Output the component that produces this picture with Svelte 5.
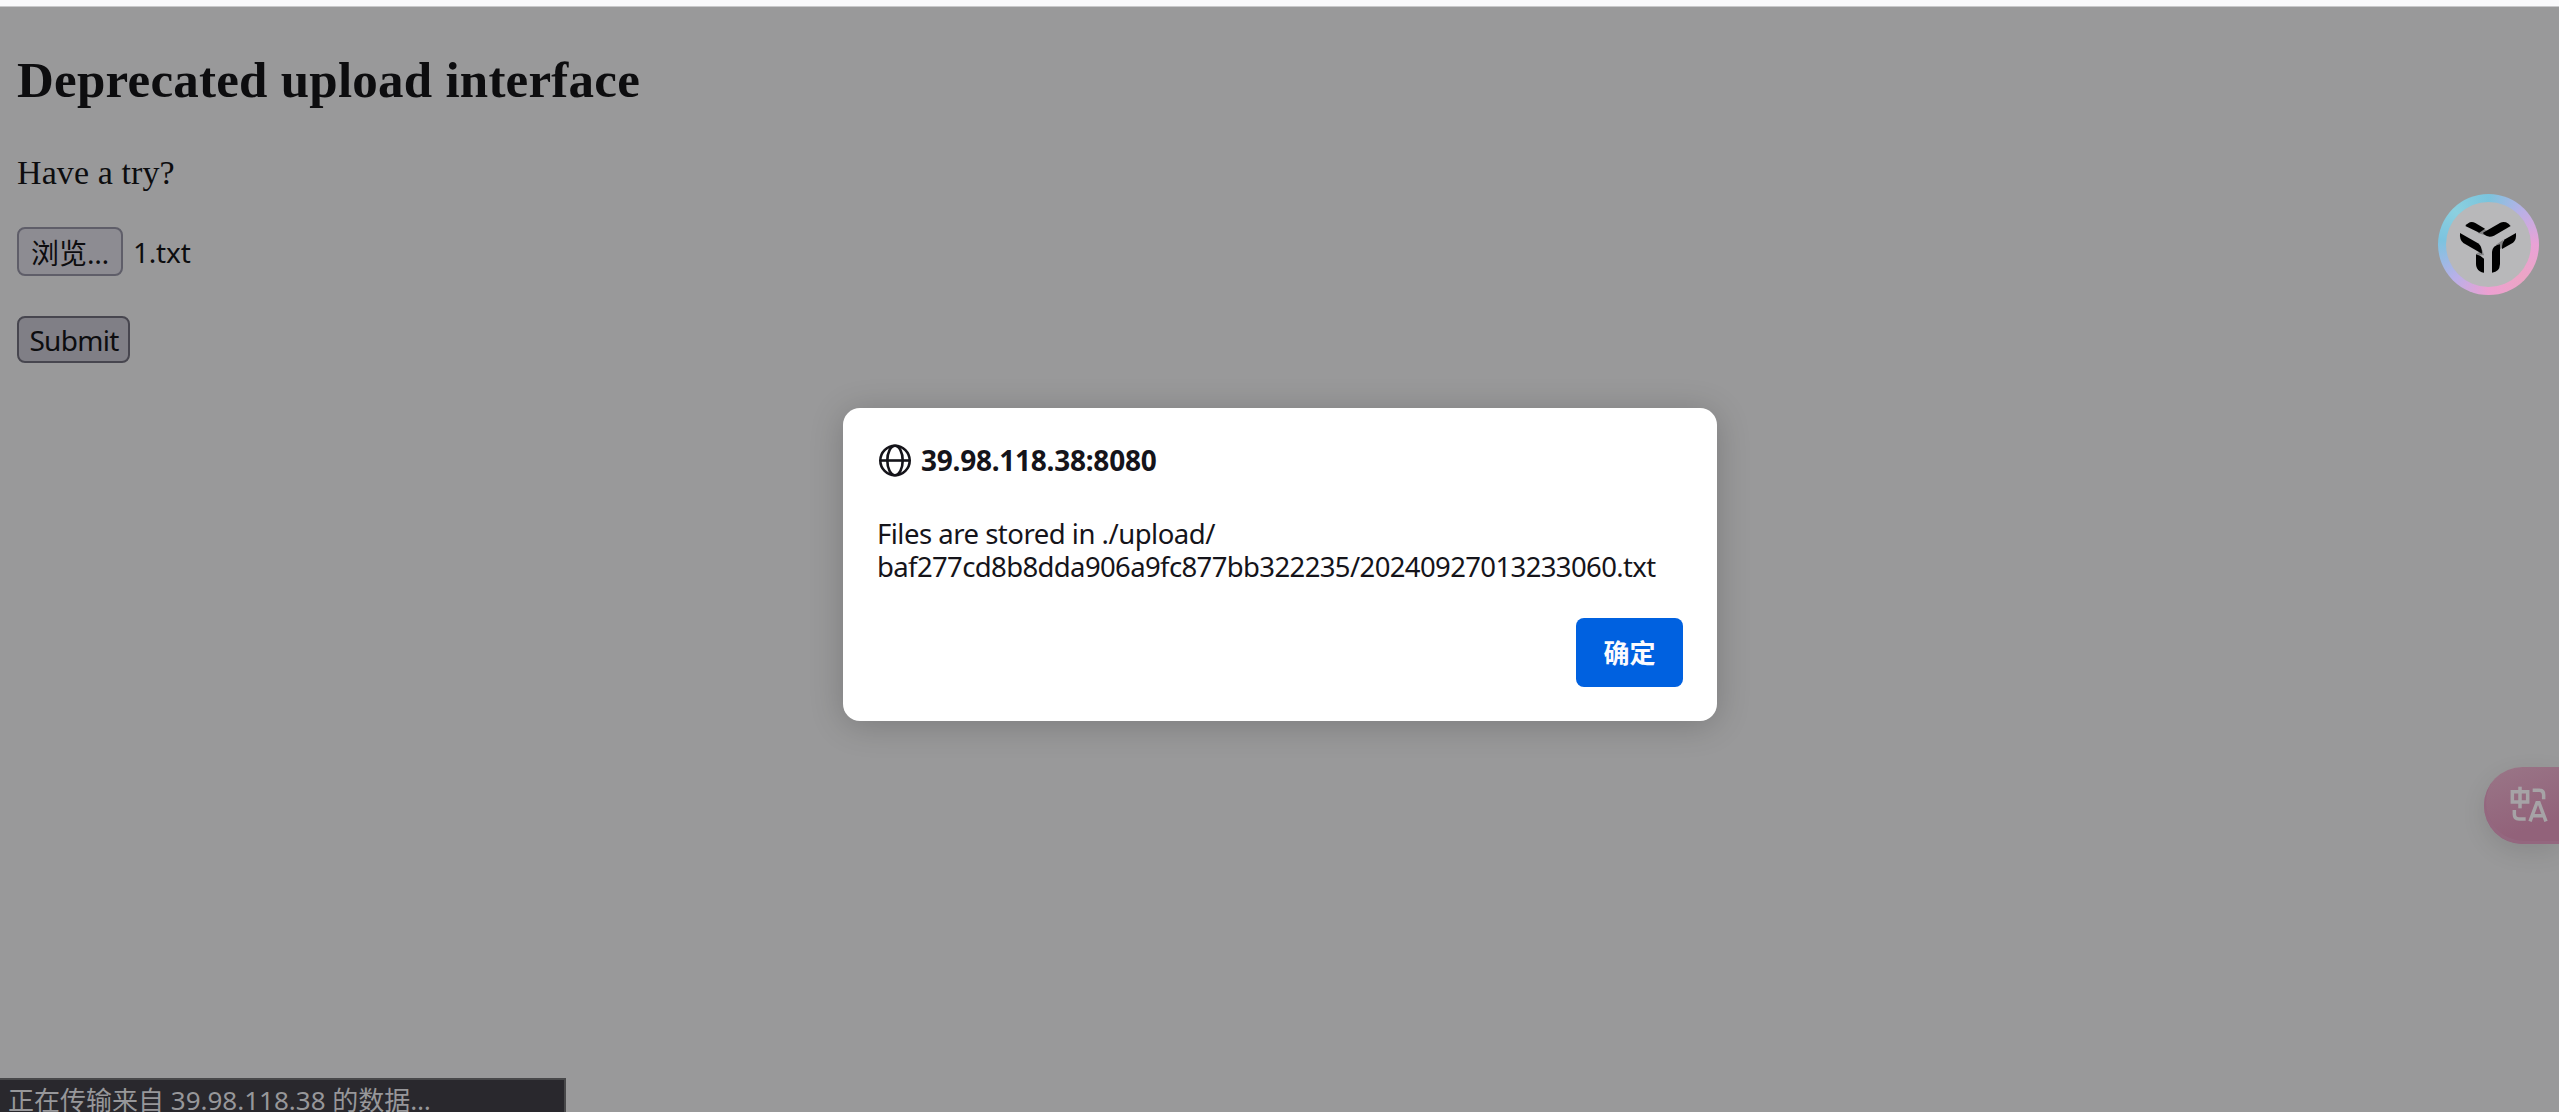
<script lang="ts">
  /**
   * App.svelte - Upload page with a modal alert shown after submitting
   */

  const host = '39.98.118.38';
  const fileName = '1.txt';
  const storedDir = './upload/';
  const storedFile = 'baf277cd8b8dda906a9fc877bb322235/20240927013233060.txt';

  let dialogOpen = $state(true);

  function closeDialog() {
    dialogOpen = false;
  }
</script>

<div class="window">
  <div class="toolbar-edge"></div>

  <main class="page">
    <h2>Deprecated upload interface</h2>
    <p class="intro">Have a try?</p>
    <form class="upload-form" onsubmit={(e) => e.preventDefault()}>
      <div class="file-row">
        <button type="button" class="control browse">浏览…</button>
        <span class="file-name">{fileName}</span>
      </div>
      <button type="submit" class="control submit"><span>Submit</span></button>
    </form>
  </main>

  <button type="button" class="assistant" aria-label="Assistant">
    <svg viewBox="78 66 255 255" aria-hidden="true">
      <g fill="#828284">
        <path d="M172 158 L191 146 L204 154 L190 164 Z" />
        <path d="M228 194 L249 180 L249 202 L240 208 Z" />
        <path d="M168 222 L187 210 L192 226 L180 226 Z" />
      </g>
      <g fill="#000">
        <path d="M136 138 Q144 127 155 126 Q160 126 166 129 L195 146 L178 158 Z" />
        <path d="M189 158 L241 128 Q249 124 258 127 Q266 130 272 138 L222 167 Q206 175 191 163 Z" />
        <path d="M120 159 L174 190 Q187 199 186 221 L130 189 Q118 180 120 159 Z" />
        <path d="M288 159 L255 178 Q246 185 246 207 L279 188 Q290 180 288 159 Z" />
        <path d="M168 223 Q181 226 192 236 L192 278 Q177 277 171 265 Q168 260 168 252 Z" />
        <path d="M216 278 L216 216 Q217 197 240 193 L240 252 Q239 276 216 278 Z" />
      </g>
    </svg>
  </button>

  <button type="button" class="translate" aria-label="Translate">
    <svg viewBox="208 134 114 108" aria-hidden="true">
      <g fill="none" stroke="#a6a3a6" stroke-width="10.5">
        <path d="M215 151 H261 V182 H215 Z" />
        <path d="M238 136 V201" />
        <path d="M276 147 H296 Q309 147 309 160 V174" />
        <path d="M221 206 V219 Q221 233 235 233 H255" />
        <path d="M268 240 L289 184 H295 L316 240 M277 223 H307" />
      </g>
    </svg>
  </button>

  {#if dialogOpen}
    <div class="dialog" role="alertdialog" aria-modal="true" aria-labelledby="dialog-title">
      <div class="dialog-header">
        <svg class="globe" viewBox="0 0 32 32" aria-hidden="true">
          <g fill="none" stroke="#15141a" stroke-width="2.6">
            <circle cx="16" cy="16" r="14.7" />
            <ellipse cx="16" cy="16" rx="7.7" ry="14.7" />
            <path d="M1 16 H31" />
          </g>
        </svg>
        <span class="dialog-title" id="dialog-title">{host}:8080</span>
      </div>
      <div class="dialog-message">
        <div class="line-dir">Files are stored in {storedDir}</div>
        <div class="line-file">{storedFile}</div>
      </div>
      <div class="dialog-actions">
        <button type="button" class="btn-primary" onclick={closeDialog}>确定</button>
      </div>
    </div>
  {/if}

  <div class="status">正在传输来自 {host} 的数据…</div>
</div>

<style>
  .window {
    position: relative;
    box-sizing: border-box;
    width: 100%;
    height: 1112px;
    overflow: hidden;
    background: #99999a;
    color: #0d0d0f;
  }

  .toolbar-edge {
    box-sizing: border-box;
    height: 7px;
    background: #f9f9fb;
    border-bottom: 1px solid #c8c8ca;
  }

  .page {
    padding: 0 17px;
    font-family: 'Liberation Serif', serif;
  }

  h2 {
    margin: 44px 0 0;
    font-size: 51px;
    line-height: 59px;
    letter-spacing: 0.24px;
  }

  .intro {
    margin: 43px 0 0;
    font-size: 34px;
    line-height: 39px;
    letter-spacing: 0.1px;
  }

  .upload-form {
    display: flex;
    flex-direction: column;
    align-items: flex-start;
    gap: 40px;
    margin-top: 35px;
    font-family: 'Noto Sans', 'Noto Sans CJK SC', sans-serif;
    font-size: 28px;
  }

  .file-row {
    display: flex;
    align-items: center;
    gap: 10px;
  }

  .control {
    box-sizing: border-box;
    display: flex;
    align-items: center;
    justify-content: center;
    padding: 0;
    border: 2px solid #5f5e69;
    border-radius: 8px;
    background: #8d8c92;
    color: #0d0d0f;
    font: inherit;
    white-space: nowrap;
  }

  .browse {
    width: 106px;
    height: 49px;
  }

  .submit {
    width: 113px;
    height: 47px;
    padding-left: 1px;
    border-color: #47464f;
    background: #807f86;
    letter-spacing: -0.7px;
  }

  .file-name {
    letter-spacing: -0.2px;
  }

  .assistant {
    position: absolute;
    top: 194px;
    right: 20px;
    width: 101px;
    height: 101px;
    padding: 8px;
    border: 0;
    border-radius: 50%;
    background: conic-gradient(
      #7bc4dd 0deg,
      #b9b0e6 45deg,
      #e9a2d6 90deg,
      #eca5c5 135deg,
      #eda0d1 180deg,
      #b9b0e8 225deg,
      #7cc3df 275deg,
      #8bd0df 315deg,
      #7bc4dd 360deg
    );
  }

  .assistant svg {
    display: block;
    width: 85px;
    height: 85px;
    border-radius: 50%;
    background: #b8b8ba;
  }

  .translate {
    position: absolute;
    top: 767px;
    right: 0;
    box-sizing: border-box;
    display: flex;
    align-items: center;
    width: 75px;
    height: 77px;
    padding: 0 0 3px 26px;
    border: 0;
    border-radius: 39px 0 0 39px;
    background: linear-gradient(160deg, #997486 8%, #92627a 75%);
    box-shadow:
      inset 2px -3px 0 #94677f,
      0 8px 24px rgba(0, 0, 0, 0.1);
  }

  .translate svg {
    width: 38px;
    height: 36px;
  }

  .dialog {
    position: absolute;
    top: 408px;
    left: 843px;
    box-sizing: border-box;
    display: flex;
    flex-direction: column;
    width: 874px;
    height: 313px;
    padding: 34px;
    border-radius: 17px;
    background: #fff;
    box-shadow: 0 4px 34px rgba(0, 0, 0, 0.2);
    color: #15141a;
    font-family: 'Noto Sans', 'Noto Sans CJK SC', sans-serif;
    font-size: 28px;
  }

  .dialog-header {
    display: flex;
    align-items: center;
    gap: 10px;
    height: 36px;
    padding-left: 2px;
  }

  .globe {
    width: 32px;
    height: 33px;
  }

  .dialog-title {
    font-weight: 700;
    letter-spacing: -0.25px;
  }

  .dialog-message {
    margin-top: 39px;
    font-size: 27.5px;
    line-height: 33px;
    white-space: nowrap;
  }

  .line-dir {
    letter-spacing: -0.5px;
  }

  .line-file {
    letter-spacing: -0.63px;
  }

  .dialog-actions {
    display: flex;
    justify-content: flex-end;
    margin-top: 35px;
  }

  .btn-primary {
    width: 107px;
    height: 69px;
    padding: 0 0 2px;
    border: 0;
    border-radius: 8px;
    background: #0061e0;
    color: #fbfbfe;
    font-family: 'Noto Sans CJK SC', sans-serif;
    font-size: 26px;
    font-weight: 700;
  }

  .status {
    position: absolute;
    top: 1078px;
    left: 0;
    box-sizing: border-box;
    width: 566px;
    height: 52px;
    padding: 0 0 0 8px;
    border: solid #48484a;
    border-width: 2px 2px 0 0;
    background: #29282d;
    color: #97979a;
    font-family: 'Noto Sans', 'Noto Sans CJK SC', sans-serif;
    font-size: 26px;
    line-height: 40px;
    white-space: nowrap;
  }
</style>
